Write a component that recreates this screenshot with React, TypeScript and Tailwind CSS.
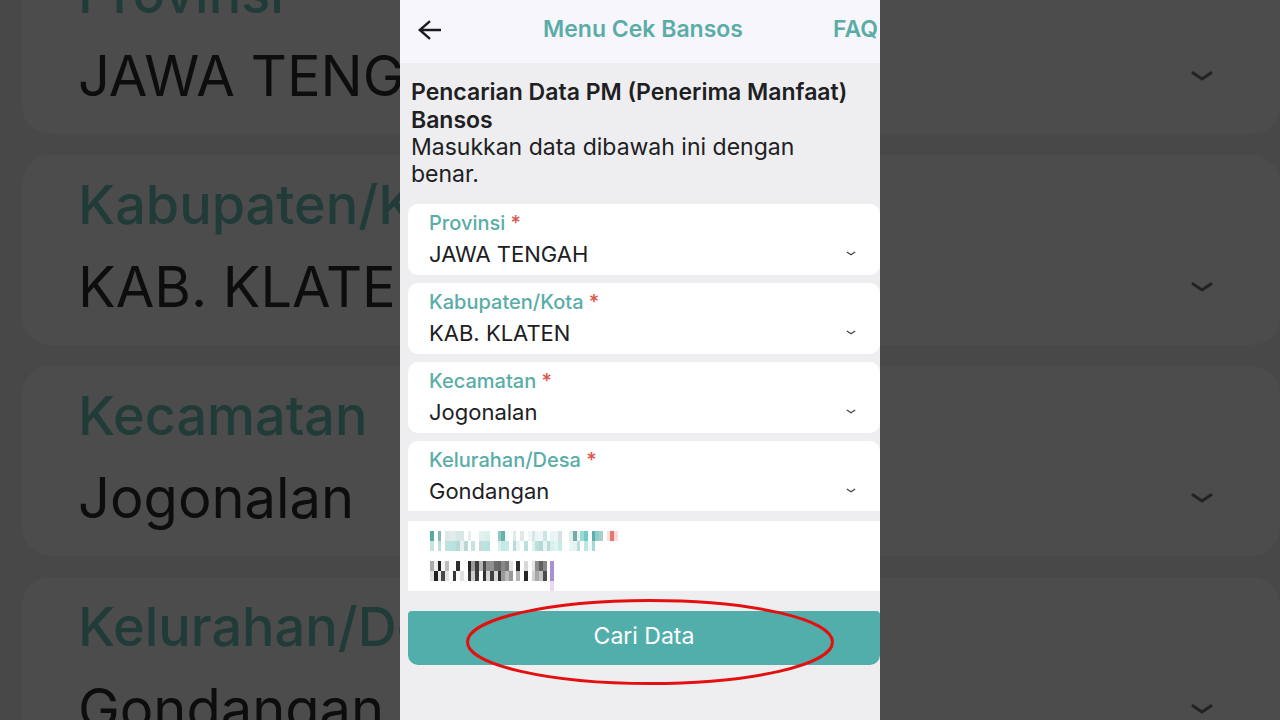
const fields = [
  { id: "provinsi", label: "Provinsi", value: "JAWA TENGAH" },
  { id: "kabupaten", label: "Kabupaten/Kota", value: "KAB. KLATEN" },
  { id: "kecamatan", label: "Kecamatan", value: "Jogonalan" },
  { id: "kelurahan", label: "Kelurahan/Desa", value: "Gondangan" },
];

// one colour per mosaic column, "-" leaves the column empty
const labelRows = [
  "56aaa6 - 86b9b6 - dce8e7 e3eceb dfeae9 d8e8e6 d8e6e5 - e4f0ef - - e2f0ee dff0ee dcefed - - 8ec8c4 69afab f2fafa - dfe9e8 - e2e8e8 - f3f6f6 d3e7e4 eef5f4 eef7f6 c8e7e4 - e6f5f3 eef3f3 d5e2e1 - - dff0ef 79aaa8 e8f5f4 9adbd6 72cbc6 - 5bb0ab 8ecdc8 a7cfcc - fbe0dd e5776d fbdcd8",
  "c8e2e0 - c3ddda - c0e2df b8e4e0 bae0dd b8d8d6 e6f2f1 b8d8d5 - c6e3e0 - c4dcda bde3df b8e2de - - dbf0ee c5e9e6 c8ebe8 - b9dad8 e8f5f4 - b9e0dc - dff1ef bde0dd b5dad6 e8f5f4 b9dcd9 d7f0ed e0f4f2 c6ebe8 - - e8f7f5 e3f5f3 b8dfdb - bde6e2 eefaf8 a5dad5",
];

const valueRows = [
  "aaaaaa eeeeee 1f1f1f f4f4f4 bbbbbb - - 2e2e2e - - 252525 999999 3c3c3c b4b4b4 484848 909090 929292 6a6a6a 666666 888888 777777 e2e2e2 - 2b2b2b - d8d8d8 - e6e6e6 8c8c8c 606060 868686 - a491cf",
  "e0e0e0 1f1f1f e8e8e8 484848 e3e3e3 - 383838 - e2e2e2 - 383838 cccccc 3a3a3a - 303030 d5d5d5 404040 d8d8d8 303030 999999 bbbbbb 999999 - b4b4b4 - 252525 - d0d0d0 a8a8a8 c4c4c4 4a4a4a - a491cf",
  "- - - - - - - - - - - - - - - - - - - - - - - - - - - - - - - - e6daf6",
];

const Mosaic = ({ rows, className }: { rows: string[]; className: string }) => (
  <svg
    className={className}
    viewBox={`0 0 50 ${rows.length}`}
    preserveAspectRatio="none"
    shapeRendering="crispEdges"
    aria-hidden="true"
  >
    {rows.map((row, y) =>
      row.split(" ").map((color, x) =>
        color === "-" ? null : (
          <rect key={`${x}-${y}`} x={x} y={y} width="1" height="1" fill={`#${color}`} />
        )
      )
    )}
  </svg>
);

const Chevron = ({ className }: { className: string }) => (
  <svg className={className} viewBox="0 0 24 12" fill="none" stroke="currentColor" strokeWidth="3" aria-hidden="true">
    <path d="M2 2.2L12 9L22 2.2" />
  </svg>
);

const Backdrop = () => (
  <div className="absolute inset-0 overflow-hidden bg-[#484848]" aria-hidden="true">
    <div className="-mt-14 flex flex-col gap-[21px] pl-[22px]">
      {fields.map((field) => (
        <div key={field.id} className="rounded-[28px] bg-[#4c4c4c] pt-5 pb-[18px] pl-14 pr-[66px]">
          <p className="text-[54px] font-medium leading-[60px] text-[#213b39]">{field.label}</p>
          <div className="mt-3 flex items-center justify-between">
            <p className="text-[56px] leading-[80px] text-[#0d0d0d]">{field.value}</p>
            <Chevron className="h-3 w-6 text-[#222222]" />
          </div>
        </div>
      ))}
    </div>
  </div>
);

const Header = () => (
  <header className="grid h-[63px] grid-cols-[1fr_auto_1fr] items-center bg-[#f8f6fd] pb-1 pl-2 pr-0.5">
    <button type="button" aria-label="Kembali" className="w-fit p-2">
      <svg className="h-7 w-7" viewBox="0 0 28 28" fill="none" stroke="#1b1b1f" strokeWidth="2.4">
        <path d="M25 14H4M14 5.2L3.8 14L14 22.8" />
      </svg>
    </button>
    <h1 className="text-[23px] font-semibold text-[#5aada7]">Menu Cek Bansos</h1>
    <a href="#faq" className="justify-self-end text-[23px] font-semibold text-[#5aada7]">
      FAQ
    </a>
  </header>
);

const SelectField = ({ field, last }: { field: (typeof fields)[number]; last: boolean }) => (
  <div className={`bg-white pt-2 pl-[21px] pr-6 ${last ? "rounded-t-[10px] pb-1.5" : "rounded-[10px] pb-[7px]"}`}>
    <label htmlFor={field.id} className="block text-[20px] font-medium leading-[22px] text-[#5aada7]">
      {field.label} <span className="text-[#d9574c]">*</span>
    </label>
    <div className="mt-1 grid items-center">
      <select
        id={field.id}
        className="col-start-1 row-start-1 h-[30px] w-full appearance-none bg-transparent text-[22px] text-[#202023] outline-none"
      >
        <option>{field.value}</option>
      </select>
      <Chevron className="pointer-events-none col-start-1 row-start-1 h-[5px] w-2.5 justify-self-end text-[#444444]" />
    </div>
  </div>
);

const App = () => {
  return (
    <div className="relative min-h-screen overflow-hidden font-['Inter',sans-serif]">
      <Backdrop />
      <main className="relative mx-auto min-h-screen w-full max-w-[480px] bg-[#eeeef0]">
        <Header />
        <form className="pl-2" onSubmit={(e) => e.preventDefault()}>
          <div className="pt-[15px] pb-4 pl-[3px] text-[#202023]">
            <h2 className="text-[23px] font-semibold leading-7">
              Pencarian Data PM (Penerima Manfaat) Bansos
            </h2>
            <p className="pr-10 text-[23px] leading-[27px]">
              Masukkan data dibawah ini dengan benar.
            </p>
          </div>
          <div className="flex flex-col gap-2">
            {fields.map((field, i) => (
              <SelectField key={field.id} field={field} last={i === fields.length - 1} />
            ))}
          </div>
          <div className="mt-2.5 bg-white pt-2.5 pl-[22px]">
            <Mosaic rows={labelRows} className="h-5 w-[188px]" />
            <Mosaic rows={valueRows} className="mt-2.5 h-[30px] w-[188px]" />
          </div>
          <div className="relative mt-5">
            <button
              type="submit"
              className="h-[54px] w-full rounded-t-[4px] rounded-b-[10px] bg-[#51aeab] pb-1 text-[23px] text-white"
            >
              Cari Data
            </button>
            <svg
              className="pointer-events-none absolute -top-3 left-[58px] h-[86px] w-[368px]"
              viewBox="0 0 368 86"
              fill="none"
              aria-hidden="true"
            >
              <ellipse cx="184" cy="43" rx="182.5" ry="41.5" stroke="#e3100f" strokeWidth="3" />
            </svg>
          </div>
        </form>
      </main>
    </div>
  );
};

export default App;
